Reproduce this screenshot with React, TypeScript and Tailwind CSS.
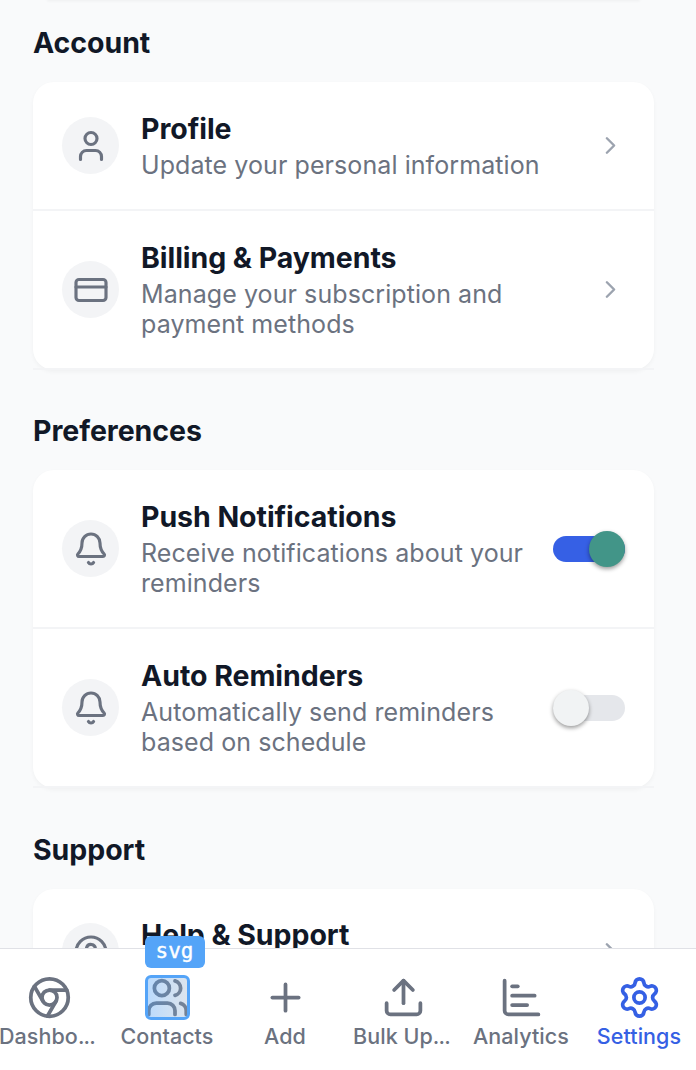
import type { ReactNode } from 'react';
import {
  Bell,
  ChartBar,
  ChevronRight,
  Chrome,
  CircleQuestionMark,
  CreditCard,
  Plus,
  Settings,
  Upload,
  User,
  Users,
  type LucideIcon,
} from 'lucide-react';

interface RowProps {
  icon: LucideIcon;
  title: string;
  desc?: string;
  className: string;
  children: ReactNode;
}

function Row({ icon: Icon, title, desc, className, children }: RowProps) {
  return (
    <div className={`flex items-center border-b-2 border-[#f3f4f6] px-[29px] ${className}`}>
      <div className="flex h-[57px] w-[57px] shrink-0 items-center justify-center rounded-full bg-gray-100">
        <Icon size={36} strokeWidth={2.1} className="text-[#6b7280]" />
      </div>
      <div className="ml-[22px] min-w-0 flex-1">
        <h3 className="text-[28.5px] leading-[36px] font-[650] tracking-[-0.05px] whitespace-nowrap text-[#111827]">
          {title}
        </h3>
        <p className="mt-[3px] min-h-[30px] text-[25px] leading-[30.4px] tracking-[0.08px] text-[#6b7280]">{desc}</p>
      </div>
      <div className="ml-[20px] shrink-0">{children}</div>
    </div>
  );
}

function Chevron() {
  return <ChevronRight size={29} strokeWidth={2} className="text-[#9ca3af]" />;
}

function Toggle({ on = false }: { on?: boolean }) {
  return (
    <div
      className={`flex h-[26px] w-[72px] items-center rounded-full ${on ? 'justify-end bg-[#3660e5]' : 'bg-[#e5e7eb]'}`}
    >
      <div
        className={`h-[36px] w-[36px] rounded-full shadow-[0_2px_4px_rgba(0,0,0,0.4)] ${on ? 'bg-[#429588]' : 'bg-[#f1f3f4]'}`}
      />
    </div>
  );
}

function Section({ title, className, children }: { title: string; className: string; children: ReactNode }) {
  return (
    <section className={className}>
      <h2 className="text-[28.5px] leading-[36px] font-[650] tracking-[-0.05px] text-[#111827]">{title}</h2>
      <div className="mt-[21px] rounded-[21px] bg-white shadow-[0_2px_4px_rgba(0,0,0,0.04)]">{children}</div>
    </section>
  );
}

const navItems = [
  { label: 'Dashbo', icon: Chrome, cut: true },
  { label: 'Contacts', icon: Users, picked: true },
  { label: 'Add', icon: Plus },
  { label: 'Bulk Up', icon: Upload, cut: true },
  { label: 'Analytics', icon: ChartBar },
  { label: 'Settings', icon: Settings, active: true },
];

export default function App() {
  return (
    <div className="flex h-[1070px] w-[696px] flex-col overflow-hidden bg-[#f9fafb] font-[Inter,sans-serif]">
      <main className="min-h-0 flex-1 overflow-hidden pr-[42px] pl-[33px]">
        <div className="mx-[15px] h-0 rounded-b-[21px] shadow-[0_0_3px_1px_rgba(0,0,0,0.06)]" />
        <Section title="Account" className="mt-[25px]">
          <Row icon={User} title="Profile" desc="Update your personal information" className="h-[129px]">
            <Chevron />
          </Row>
          <Row
            icon={CreditCard}
            title="Billing & Payments"
            desc="Manage your subscription and payment methods"
            className="h-[159px]"
          >
            <Chevron />
          </Row>
        </Section>
        <Section title="Preferences" className="mt-[43px]">
          <Row
            icon={Bell}
            title="Push Notifications"
            desc="Receive notifications about your reminders"
            className="h-[159px]"
          >
            <Toggle on />
          </Row>
          <Row
            icon={Bell}
            title="Auto Reminders"
            desc="Automatically send reminders based on schedule"
            className="h-[159px]"
          >
            <Toggle />
          </Row>
        </Section>
        <Section title="Support" className="mt-[43.5px]">
          <Row icon={CircleQuestionMark} title="Help & Support" className="h-[128px]">
            <Chevron />
          </Row>
        </Section>
      </main>
      <nav className="-ml-[10px] flex h-[122px] w-[708px] shrink-0 border-t border-[#e0e1e6] bg-white pt-[26px]">
        {navItems.map(({ label, icon: Icon, cut, picked, active }) => (
          <div
            key={label}
            className={`flex flex-1 flex-col items-center ${active ? 'text-[#3560e4]' : 'text-[#6b7280]'}`}
          >
            <div className="relative">
              <Icon size={45} strokeWidth={2} />
              {picked && (
                <>
                  <div className="absolute inset-0 rounded-[6px] border-[3px] border-[#54a4f8] bg-linear-to-r from-[#54a4f8]/40 to-[#8aa5c4]/30" />
                  <div className="absolute -top-[39px] left-0 flex h-[32px] w-[60px] items-center justify-center rounded-[6px] bg-[#54a4f8] font-['DejaVu_Sans_Mono',monospace] text-[21px] text-white [-webkit-text-stroke:0.4px_white]">
                    svg
                  </div>
                </>
              )}
            </div>
            <span
              className={`mt-[2.5px] text-[21.5px] leading-[26px] font-medium tracking-[0.06px] whitespace-nowrap ${cut ? 'w-[100px]' : ''}`}
            >
              {label}
              {cut && <span className="tracking-[-0.8px]">...</span>}
            </span>
          </div>
        ))}
      </nav>
    </div>
  );
}
